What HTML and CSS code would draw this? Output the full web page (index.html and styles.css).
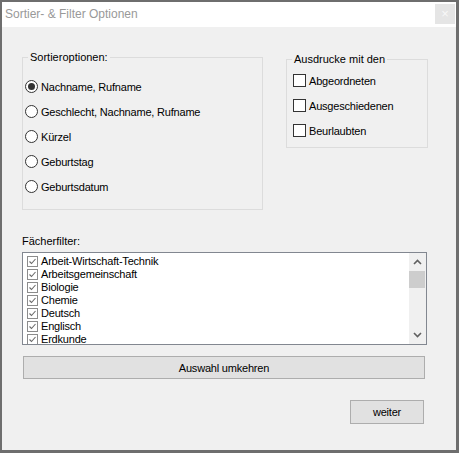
FILE: index.html
```html
<!DOCTYPE html>
<html lang="de">

<head>
    <meta charset="UTF-8" />
    <meta name="viewport" content="width=device-width, initial-scale=1.0" />
    <title>Sortier- &amp; Filter Optionen</title>
    <link rel="stylesheet" href="styles.css">
</head>

<body>

    <div class="window">

        <div class="titlebar">
            <span class="title">Sortier- &amp; Filter Optionen</span>
            <span class="close">&times;</span>
        </div>

        <div class="content">

            <div class="top-row">

                <div class="group sort-group">
                    <span class="group-title">Sortieroptionen:</span>
                    <div class="options">
                        <label class="option"><span class="radio checked"></span>Nachname, Rufname</label>
                        <label class="option"><span class="radio"></span>Geschlecht, Nachname, Rufname</label>
                        <label class="option"><span class="radio"></span>Kürzel</label>
                        <label class="option"><span class="radio"></span>Geburtstag</label>
                        <label class="option"><span class="radio"></span>Geburtsdatum</label>
                    </div>
                </div>

                <div class="group print-group">
                    <span class="group-title">Ausdrucke mit den</span>
                    <div class="options">
                        <label class="option"><span class="checkbox"></span>Abgeordneten</label>
                        <label class="option"><span class="checkbox"></span>Ausgeschiedenen</label>
                        <label class="option"><span class="checkbox"></span>Beurlaubten</label>
                    </div>
                </div>
            </div>

            <div class="filter-label">Fächerfilter:</div>

            <div class="listbox">
                <ul class="list-items">
                    <li><svg class="tick" width="11" height="11" viewBox="0 0 11 11"><rect x="0.5" y="0.5" width="10" height="10" fill="#fff" stroke="#8c8c8c"/><path d="M2.5 5.5 L4.5 7.5 L8.5 3" fill="none" stroke="#6b6b6b" stroke-width="1.1"/></svg>Arbeit-Wirtschaft-Technik</li>
                    <li><svg class="tick" width="11" height="11" viewBox="0 0 11 11"><rect x="0.5" y="0.5" width="10" height="10" fill="#fff" stroke="#8c8c8c"/><path d="M2.5 5.5 L4.5 7.5 L8.5 3" fill="none" stroke="#6b6b6b" stroke-width="1.1"/></svg>Arbeitsgemeinschaft</li>
                    <li><svg class="tick" width="11" height="11" viewBox="0 0 11 11"><rect x="0.5" y="0.5" width="10" height="10" fill="#fff" stroke="#8c8c8c"/><path d="M2.5 5.5 L4.5 7.5 L8.5 3" fill="none" stroke="#6b6b6b" stroke-width="1.1"/></svg>Biologie</li>
                    <li><svg class="tick" width="11" height="11" viewBox="0 0 11 11"><rect x="0.5" y="0.5" width="10" height="10" fill="#fff" stroke="#8c8c8c"/><path d="M2.5 5.5 L4.5 7.5 L8.5 3" fill="none" stroke="#6b6b6b" stroke-width="1.1"/></svg>Chemie</li>
                    <li><svg class="tick" width="11" height="11" viewBox="0 0 11 11"><rect x="0.5" y="0.5" width="10" height="10" fill="#fff" stroke="#8c8c8c"/><path d="M2.5 5.5 L4.5 7.5 L8.5 3" fill="none" stroke="#6b6b6b" stroke-width="1.1"/></svg>Deutsch</li>
                    <li><svg class="tick" width="11" height="11" viewBox="0 0 11 11"><rect x="0.5" y="0.5" width="10" height="10" fill="#fff" stroke="#8c8c8c"/><path d="M2.5 5.5 L4.5 7.5 L8.5 3" fill="none" stroke="#6b6b6b" stroke-width="1.1"/></svg>Englisch</li>
                    <li><svg class="tick" width="11" height="11" viewBox="0 0 11 11"><rect x="0.5" y="0.5" width="10" height="10" fill="#fff" stroke="#8c8c8c"/><path d="M2.5 5.5 L4.5 7.5 L8.5 3" fill="none" stroke="#6b6b6b" stroke-width="1.1"/></svg>Erdkunde</li>
                </ul>
                <div class="scrollbar">
                    <span class="arrow"><svg width="9" height="6" viewBox="0 0 9 6"><path d="M1 5 L4.5 1.5 L8 5" fill="none" stroke="#606060" stroke-width="1.6"/></svg></span>
                    <span class="thumb"></span>
                    <span class="track"></span>
                    <span class="arrow"><svg width="9" height="6" viewBox="0 0 9 6"><path d="M1 1 L4.5 4.5 L8 1" fill="none" stroke="#606060" stroke-width="1.6"/></svg></span>
                </div>
            </div>

            <button class="btn invert-btn">Auswahl umkehren</button>

            <div class="footer">
                <button class="btn next-btn">weiter</button>
            </div>
        </div>
    </div>

</body>

</html>
```

FILE: styles.css
```css
* {
    box-sizing: border-box;
}

body {
    margin: 0;
    font-family: "Liberation Sans", Arial, sans-serif;
    font-size: 11px;
    color: #000;
}

.window {
    width: 459px;
    height: 453px;
    border-style: solid;
    border-color: #6e6e6e;
    border-width: 2px 3px 3px 2px;
    background-color: #f0f0f0;
    overflow: hidden;
}

/* title bar */

.titlebar {
    display: flex;
    justify-content: space-between;
    align-items: flex-start;
    height: 25px;
    padding-left: 3px;
    background-color: #fff;
}

.title {
    font-size: 12px;
    line-height: 25px;
    color: #999;
}

.close {
    width: 20px;
    height: 20px;
    margin: 2px 1px 0 0;
    background-color: #e5e5e5;
    color: #f8f8f8;
    font-size: 13px;
    line-height: 19px;
    text-align: center;
}

.content {
    padding-left: 20px;
}

/* group boxes */

.top-row {
    display: flex;
    align-items: flex-start;
    margin-top: 30px;
}

.group {
    border: 1px solid #dcdcdc;
}

.sort-group {
    width: 241px;
    height: 153px;
}

.print-group {
    width: 142px;
    height: 89px;
    margin-left: 23px;
    margin-top: 2px;
}

.group-title {
    display: table;
    height: 14px;
    margin: -8px 0 0 5px;
    padding: 0 2px;
    line-height: 14px;
    background-color: #f0f0f0;
}

.options {
    display: flex;
    flex-direction: column;
}

.sort-group .options {
    margin-top: 10px;
    padding-left: 2px;
}

.print-group .options {
    margin-top: 2px;
    padding-left: 6px;
}

.option {
    display: flex;
    align-items: center;
    height: 25px;
    letter-spacing: -0.2px;
}

.radio {
    position: relative;
    width: 13px;
    height: 13px;
    margin-right: 3px;
    border: 1px solid #333;
    border-radius: 50%;
    background-color: #fff;
}

.radio.checked::after {
    content: "";
    position: absolute;
    left: 2px;
    top: 2px;
    width: 7px;
    height: 7px;
    border-radius: 50%;
    background-color: #333;
}

.checkbox {
    width: 13px;
    height: 13px;
    margin-right: 3px;
    border: 1px solid #333;
    background-color: #fff;
}

/* subject list */

.filter-label {
    margin-top: 24px;
    line-height: 15px;
}

.listbox {
    display: flex;
    width: 405px;
    height: 93px;
    margin-top: 3px;
    border: 1px solid #828790;
    background-color: #fff;
}

.list-items {
    flex: 1;
    margin: 0;
    padding: 2px 0 0 4px;
    list-style: none;
    overflow: hidden;
}

.list-items li {
    display: flex;
    align-items: center;
    height: 13px;
    line-height: 13px;
    letter-spacing: -0.2px;
    white-space: nowrap;
}

.tick {
    flex-shrink: 0;
    margin-right: 3px;
}

.scrollbar {
    display: flex;
    flex-direction: column;
    width: 17px;
    background-color: #f0f0f0;
}

.arrow {
    display: flex;
    justify-content: center;
    align-items: center;
    height: 18px;
}

.thumb {
    height: 17px;
    margin: 0 1px 0 0;
    background-color: #cdcdcd;
}

.track {
    flex: 1;
}

/* buttons */

.btn {
    border: 1px solid #adadad;
    background-color: #e1e1e1;
    font-family: "Liberation Sans", Arial, sans-serif;
    font-size: 11px;
    color: #000;
    letter-spacing: -0.2px;
    padding: 0;
}

.invert-btn {
    display: block;
    width: 402px;
    height: 23px;
    margin: 11px 0 0 1px;
}

.footer {
    display: flex;
    justify-content: flex-end;
    margin-top: 21px;
    padding-right: 32px;
}

.next-btn {
    width: 74px;
    height: 24px;
}
```
